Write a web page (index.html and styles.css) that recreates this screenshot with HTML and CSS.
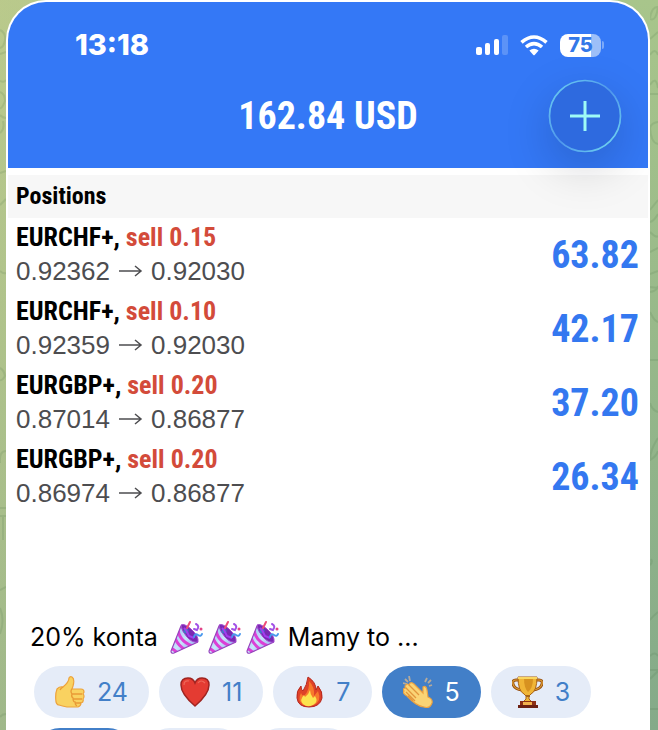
FILE: index.html
```html
<!DOCTYPE html>
<html lang="pl">
<head>
<meta charset="utf-8">
<meta name="viewport" content="width=device-width, initial-scale=1">
<title>162.84 USD</title>
<link rel="stylesheet" href="styles.css">
</head>
<body>
<svg class="doodles doodles-left" width="6" height="730" viewBox="0 0 6 730" aria-hidden="true">
  <path d="M0 30q6 3 5 10t-5 8M0 54l6-2M0 81q4 2 6-1M0 92q5 2 5 9-3 8-5 7M0 115q3 3 6 3M0 133q5-4 3-12M0 173l6-2M0 205l6-6M0 271q3 3 6 2M0 368q4 2 5 8-3 5-5 4M0 463q-1-12 6-12M0 508h6M0 516h6M3 516v24M0 590l6-3M0 608q5 12 0 26M0 717q2-3 6-3"/>
</svg>
<svg class="doodles doodles-right" width="8" height="730" viewBox="0 0 8 730" aria-hidden="true">
  <path d="M0 18q2-12 8-11-2 15-8 12M0 39l8-7M0 55q5-8 8 0M0 85q6-10 8 3M0 94h8M8 122q-7 1-8 6 1 15 8 16M0 210l8-10M0 222q4-1 8-8M0 232q6 6 8 4M0 252l8-4M0 274l8-3M0 287l8 1M0 292q7-1 8-6M0 312q4 9 8 10M0 360h8M0 403q2 7 8 9M8 438q-8 12-8 22 6-3 8-9M0 565q3-3 1-6M0 620q3-4 8-8M0 656q5-5 8 0M0 670h8M0 679l8-8M0 709h8"/>
</svg>
<main class="card">
  <section class="trading">
    <header class="topbar">
      <div class="status">
        <time class="clock">13:18</time>
        <div class="indicators">
          <svg width="32" height="20" viewBox="0 0 32 20" role="img" aria-label="Signal">
            <g fill="#fff"><rect y="12" width="6" height="8" rx="2"/><rect x="9" y="8" width="5" height="12" rx="2"/><rect x="18" y="4" width="5" height="16" rx="2"/><rect x="26" width="6" height="20" rx="2" opacity=".2"/></g>
          </svg>
          <svg width="28" height="21" viewBox="0 0 28 21" role="img" aria-label="Wi-Fi">
            <g fill="none" stroke="#fff" stroke-width="3.6"><path d="M1.5 7.4Q14-3.4 26.500 7.400"/><path d="M6 12Q14 5.200 22 12"/></g>
            <path fill="#fff" d="M9.400 15.600Q14 11.800 18.600 15.600L14.700 20Q14 20.700 13.300 20Z"/>
          </svg>
          <div class="battery"><span>75</span><i></i></div>
        </div>
      </div>
      <div class="account">
        <h1>162.84 USD</h1>
        <button class="add" type="button" aria-label="Add">
          <svg width="72" height="72" viewBox="0 0 72 72" aria-hidden="true">
            <defs><linearGradient id="ring" x1="0" y1="0" x2="1" y2="1"><stop offset="0" stop-color="#6cd3f2"/><stop offset=".25" stop-color="#5fb5ee"/><stop offset=".5" stop-color="#4e96ed"/><stop offset=".75" stop-color="#60b8ee"/><stop offset="1" stop-color="#7be4ef"/></linearGradient></defs>
            <circle cx="36" cy="36" r="35.500" fill="#2e6adf" stroke="url(#ring)" stroke-width="1.700"/>
            <path d="M21 36h30M36 21v30" stroke="#9efaf6" stroke-width="3"/>
          </svg>
        </button>
      </div>
    </header>
    <h2>Positions</h2>
    <ul class="positions">
      <li><div><h3>EURCHF+, <em>sell 0.15</em></h3><p>0.92362 <svg class="arrow" viewBox="0 0 25 14" role="img" aria-label="to"><path d="M1 7h22M17 2l6 5-6 5"/></svg> 0.92030</p></div><strong>63.82</strong></li>
      <li><div><h3>EURCHF+, <em>sell 0.10</em></h3><p>0.92359 <svg class="arrow" viewBox="0 0 25 14" role="img" aria-label="to"><path d="M1 7h22M17 2l6 5-6 5"/></svg> 0.92030</p></div><strong>42.17</strong></li>
      <li><div><h3>EURGBP+, <em>sell 0.20</em></h3><p>0.87014 <svg class="arrow" viewBox="0 0 25 14" role="img" aria-label="to"><path d="M1 7h22M17 2l6 5-6 5"/></svg> 0.86877</p></div><strong>37.20</strong></li>
      <li><div><h3>EURGBP+, <em>sell 0.20</em></h3><p>0.86974 <svg class="arrow" viewBox="0 0 25 14" role="img" aria-label="to"><path d="M1 7h22M17 2l6 5-6 5"/></svg> 0.86877</p></div><strong>26.34</strong></li>
    </ul>
  </section>
  <section class="post">
    <p class="message">
      <span>20% konta</span>
      <span class="party">
        <svg width="34" height="34" viewBox="0 0 34 34" role="img" aria-label="Party popper">
          <defs>
            <linearGradient id="cone" x1="0" y1="0" x2="1" y2="1"><stop stop-color="#8fb4ee"/><stop offset=".5" stop-color="#c8e4fc"/><stop offset="1" stop-color="#7f8ee8"/></linearGradient>
            <clipPath id="coneclip"><path d="M11 6L1 31q0 3 3 2L28 22Q19 17 11 6Z"/></clipPath>
            <g id="popper">
              <path d="M11 6L1 31q0 3 3 2L28 22Q19 17 11 6Z" fill="url(#cone)"/>
              <g clip-path="url(#coneclip)" stroke="#dc3fd6" stroke-width="3" fill="none"><path d="M8 10q2 13 18 17M5 18q3 8 12 13M0 27l8 6"/></g>
              <path d="M11 6L1 31q0 3 3 2L28 22" fill="none" stroke="#9642bd" stroke-width="1.200"/>
              <path d="M11 5q3-2 10 4 8 7 7 13-6 1-11-5-6-7-6-12Z" fill="#7929b2" stroke="#a448cf"/>
              <circle cx="16" cy="11" r="2.500" fill="#3e79c6"/><path d="M14 8l2 2 3 6 5 2" stroke="#a43cf0" stroke-width="2" fill="none"/>
              <g fill="none" stroke-width="2" stroke-linecap="round"><path d="M17 8l3-6" stroke="#ef4d79"/><path d="M26 4q4 2 1 6l-3-1" stroke="#a151e6"/><path d="M24 17q1-4 4-2t4-1" stroke="#4a98ed"/></g>
              <circle cx="31" cy="9" r="1.500" fill="#e24388"/>
            </g>
          </defs>
          <use href="#popper"/>
        </svg>
        <svg width="34" height="34" viewBox="0 0 34 34" role="img" aria-label="Party popper"><use href="#popper"/></svg>
        <svg width="34" height="34" viewBox="0 0 34 34" role="img" aria-label="Party popper"><use href="#popper"/></svg>
      </span>
      <span>Mamy to ...</span>
    </p>
    <div class="reactions">
      <button type="button">
        <svg width="30" height="32" viewBox="0 0 30 32" role="img" aria-label="Thumbs up">
          <path d="M2 13Q5 10 8 11 14 6 14 2q1-2 3-1 3 2 1 9l-1 3h9q3 0 3 3l-1 2q2 2 0 5 1 3-2 4 0 3-3 4H12q-5-1-8-2-2 0-3-3-1-8 1-13Z" fill="#f9d260" stroke="#eda33d" stroke-width="1.200"/>
          <path d="M17 13q-2 2 0 5-1 3 1 4 0 4 2 4 0 3 2 4M17 18h10M18 23h9M20 27h6M8 11q-2 1-3 3" fill="none" stroke="#e99a36" stroke-width="1.300"/>
        </svg><span>24</span>
      </button>
      <button type="button">
        <svg width="30" height="32" viewBox="0 0 30 32" role="img" aria-label="Heart">
          <path d="M15 30Q1 18 1 9 1 2 8 2q5 0 7 5 2-5 7-5 7 0 7 7 0 9-14 21Z" fill="#e43b32" stroke="#9f2420" stroke-width="1.500"/>
          <path d="M4 9q0-5 5-4M18 7q3-4 7 0" fill="none" stroke="#ee6859" stroke-width="1.200"/>
        </svg><span>11</span>
      </button>
      <button type="button">
        <svg width="30" height="32" viewBox="0 0 30 32" role="img" aria-label="Fire">
          <path d="M14 1q8 5 8 13l2-4q5 6 4 12-2 9-13 9T3 22q-1-7 4-12 0 4 2 5Q13 9 14 1Z" fill="#df4228" stroke="#b7271d"/>
          <path d="M15 5q6 6 5 15l4-5q4 10-4 14H9q-6-5-2-12 1 3 3 3 6-6 5-15Z" fill="#f8792c"/>
          <path d="M16 14q0 4 3 8l2-2q4 6-2 9-6 3-10-1-4-4 1-9l1 2q4-3 5-7Z" fill="#fce44e"/>
        </svg><span>7</span>
      </button>
      <button type="button" class="chosen" aria-pressed="true">
        <svg width="30" height="32" viewBox="0 0 30 32" role="img" aria-label="Clapping hands">
          <g stroke="#b5aa9b" stroke-width="1.800"><path d="M2 3l3 3M6 0l1 5M0 7l4 1M22 6l2-4M25 7l3-3M26 10l3-1"/></g>
          <path d="M3 9q1-2 3 0l1-2q2-1 4 1l9 9V11q3-2 4 3l1 7q5 2 4 6-2 6-8 4-8-1-17-11-5-3-3-5-2-3 2-3-2-2 0-3Z" fill="#fad475" stroke="#eba242" stroke-width="1.200"/>
          <path d="M6 9l10 10M3 12l10 10M3 16l9 9M5 20l5 5" fill="none" stroke="#e2963c" stroke-width="1.300"/>
        </svg><span>5</span>
      </button>
      <button type="button">
        <svg width="31" height="32" viewBox="0 0 31 32" role="img" aria-label="Trophy">
          <path d="M7 4H4Q0 4 1 8q1 5 9 6M24 4h3q4 0 3 4-1 5-9 6" fill="none" stroke="#985113" stroke-width="3"/>
          <path d="M7 4H4Q0 4 1 8q1 5 9 6M24 4h3q4 0 3 4-1 5-9 6" fill="none" stroke="#e2a235" stroke-width="1.200"/>
          <path d="M6 1h19q0 14-6 17l-2 2v3l3 3h-9l3-3v-3l-2-2Q6 15 6 1Z" fill="#f0b536" stroke="#a86115"/>
          <path d="M12 2q0 10 4 14 5-4 5-14Z" fill="#d79220"/><path d="M6 2h19" stroke="#fbd760" stroke-width="2"/><path d="M14 19h4v2h-4z" fill="#a66417"/>
          <path d="M8 25h16v5H8z" fill="#8d2f16"/><path d="M11 26h9v3h-9z" fill="#f3b24d"/><path d="M6 29h20v3H6z" fill="#6c2012"/>
        </svg><span>3</span>
      </button>
      <button type="button" class="blank chosen" aria-label="Reaction" aria-pressed="true"></button>
      <button type="button" class="blank" aria-label="Reaction"></button>
      <button type="button" class="blank" aria-label="Reaction"></button>
    </div>
  </section>
</main>
</body>
</html>
```

FILE: styles.css
```css
* { box-sizing: border-box; }

html { height: 100%; overflow: hidden; }

body {
  --condensed: "Roboto Condensed", "Arial Narrow", "Liberation Sans", sans-serif;
  margin: 0;
  height: 100%;
  overflow: hidden;
  padding: 0 8px 0 6px;
  background: linear-gradient(100deg, rgba(200, 205, 140, .55), rgba(160, 195, 135, 0) 60%), linear-gradient(#a8c58b, #84aa89);
  font-family: Inter, "Liberation Sans", sans-serif;
}

h1, h2, h3, p, ul { margin: 0; padding: 0; }
button { border: 0; font: inherit; cursor: pointer; }
svg { flex: none; }

.doodles {
  position: absolute;
  top: 0;
  fill: none;
  stroke: #426c3f;
  stroke-opacity: .14;
  stroke-width: 2;
}
.doodles-left { left: 0; }
.doodles-right { right: 0; }

.card {
  height: 100%;
  overflow: hidden;
  padding: 2px 2px 0;
  border-radius: 40px 40px 0 0;
  background: #fff;
}

.topbar {
  position: relative;
  height: 166px;
  border-radius: 38px 38px 0 0;
  background: #3478f6;
  color: #fff;
}
.status {
  display: flex;
  align-items: center;
  justify-content: space-between;
  padding: 26px 44px 0 67px;
  height: 60px;
}
.clock { font-size: 29px; font-weight: 800; line-height: 34px; }
.indicators { display: flex; align-items: center; gap: 12px; }

.battery { display: flex; align-items: center; gap: 1px; }
.battery span {
  width: 41px;
  border-radius: 8px;
  background: linear-gradient(90deg, #fff 75%, #9dbff8 75%);
  color: #3478e8;
  font-size: 20px;
  font-weight: 800;
  line-height: 23px;
  text-align: center;
}
.battery i { width: 2px; height: 8px; border-radius: 0 2px 2px 0; background: #7ca9f8; }

.account {
  display: grid;
  grid-template-columns: 72px 1fr 72px;
  align-items: center;
  padding: 18px 27px 0;
}
.account h1 { grid-column: 2; text-align: center; }
.account h1, .positions strong { font: 700 38px/44px var(--condensed); }
.add {
  width: 72px;
  height: 72px;
  padding: 0;
  border-radius: 50%;
  background: none;
  box-shadow: 0 16px 48px rgba(0, 0, 20, .18);
}
.add svg { display: block; overflow: visible; }

h2 {
  margin-top: 7px;
  padding: 0 8px;
  background: #f7f7f7;
  font: 700 24px/43px var(--condensed);
}

.positions { padding: 0 9px 0 8px; list-style: none; }
.positions li {
  display: flex;
  align-items: center;
  justify-content: space-between;
  height: 74px;
}
.positions li div { padding-bottom: 2px; }
.positions h3 { font: 700 26px/34px var(--condensed); }
.positions em { color: #d34b3a; font-style: normal; }
.positions p {
  display: flex;
  align-items: center;
  gap: 8px;
  color: #4d4d50;
  font: 26px/34px "Liberation Sans", sans-serif;
}
.positions strong { color: #3478f0; }
.arrow { width: 25px; height: 14px; fill: none; stroke: #4d4d50; stroke-width: 1.500; }

.post { padding: 106px 22px 0; }
.message {
  display: flex;
  align-items: center;
  gap: 12px;
  font-size: 25px;
  line-height: 34px;
}
.party { display: flex; gap: 4px; }
.party + span { margin-left: -4px; }

.reactions { display: flex; flex-wrap: wrap; gap: 10px; margin-top: 12px; padding: 0 4px; }
.reactions button {
  display: flex;
  align-items: center;
  gap: 12px;
  height: 52px;
  min-width: 98px;
  padding: 0 21px;
  border-radius: 26px;
  background: #e5ecf8;
  color: #427fc8;
  font-size: 25px;
}
.reactions .chosen { background: #427fc8; color: #fff; }
.reactions .blank { width: 100px; }
```
